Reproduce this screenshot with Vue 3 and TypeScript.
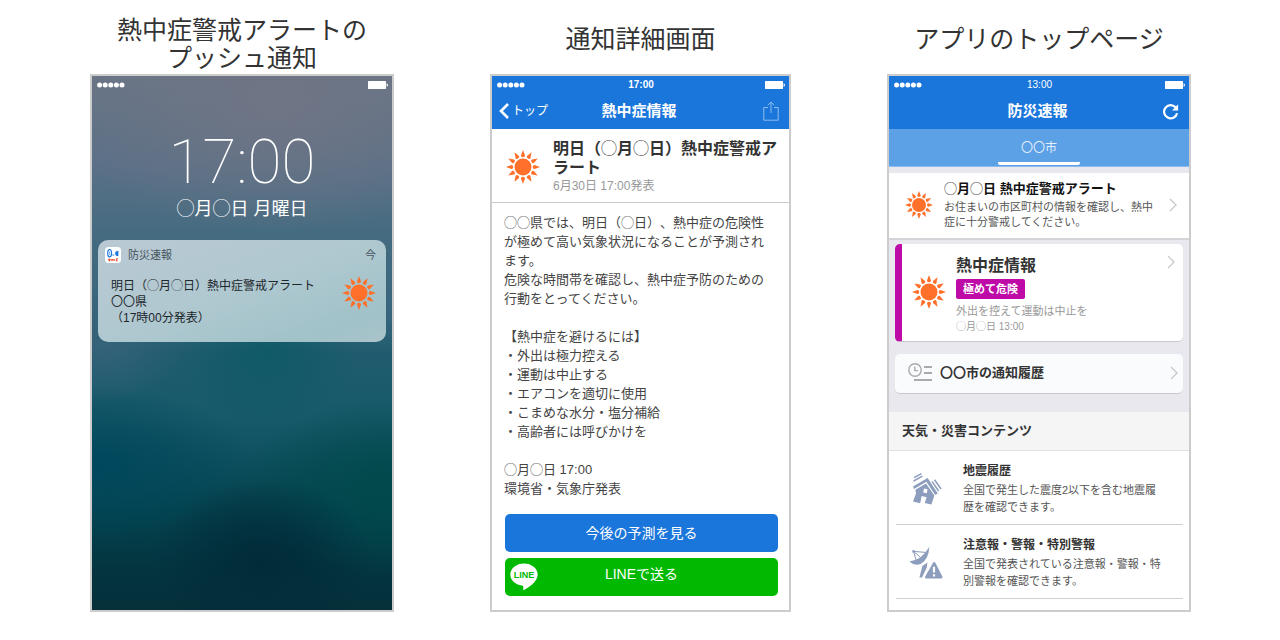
<script setup lang="ts">
interface ContentItem {
  id: 'quake' | 'dish'
  title: string
  text: string
}

const rays: number[] = Array.from({ length: 12 }, (_, i) => i * 30)

const tips: string[] = [
  '外出は極力控える',
  '運動は中止する',
  'エアコンを適切に使用',
  'こまめな水分・塩分補給',
  '高齢者には呼びかけを',
]

const contents: ContentItem[] = [
  { id: 'quake', title: '地震履歴', text: '全国で発生した震度2以下を含む地震履歴を確認できます。' },
  { id: 'dish', title: '注意報・警報・特別警報', text: '全国で発表されている注意報・警報・特別警報を確認できます。' },
]
</script>

<template>
  <svg class="defs" aria-hidden="true">
    <symbol id="sun" viewBox="0 0 32 32">
      <circle cx="16" cy="16" r="8" fill="#ff702b" />
      <path
        v-for="angle in rays"
        :key="angle"
        d="M16 0 L17.9 5.2 Q18 6.8 16 6.8 Q14 6.8 14.1 5.2 Z"
        fill="#ff702b"
        :transform="`rotate(${angle} 16 16)`"
      />
    </symbol>
    <symbol id="signal" viewBox="0 0 28 6">
      <circle v-for="n in 5" :key="n" :cx="n * 5.6 - 3" cy="3" r="2.5" fill="#fff" />
    </symbol>
    <symbol id="battery" viewBox="0 0 20 8">
      <rect width="18" height="8" rx="0.6" fill="#fff" />
      <path d="M18.6 2.2 Q20 2.6 20 4 Q20 5.4 18.6 5.8 Z" fill="#fff" />
    </symbol>
    <symbol id="chevron" viewBox="0 0 8 14">
      <path d="M1 1 L7 7 L1 13" fill="none" stroke="#cacace" stroke-width="1.4" />
    </symbol>
  </svg>

  <main class="page">
    <section class="column">
      <h2 class="caption two-line">熱中症警戒アラートの<br />プッシュ通知</h2>
      <div class="phone lock">
        <div class="status">
          <svg class="signal"><use href="#signal" /></svg>
          <svg class="battery"><use href="#battery" /></svg>
        </div>
        <time class="clock">17:00</time>
        <p class="lock-date">◯月◯日 月曜日</p>
        <article class="notice">
          <header class="notice-head">
            <svg class="app-icon" viewBox="0 0 16 16" aria-hidden="true">
              <rect width="16" height="16" rx="3.5" fill="#fff" />
              <ellipse cx="4.6" cy="6.2" rx="1.9" ry="3.7" fill="none" stroke="#1b76db" stroke-width="1.2" />
              <path d="M4.6 4.4 V8" stroke="#7db4ee" stroke-width="1" />
              <path d="M13.4 3.8 V9.2 Q10.2 9.4 10.2 6.5 Q10.2 3.8 13.4 3.8 Z" fill="#1b76db" />
              <path d="M7.4 8 H9.2" stroke="#1b76db" stroke-width="1" />
              <path d="M3.4 11.8 L4.4 13.4 L5.4 11.8 M6 13 H7.4 M8 12 V13.8 M9 13 H10.2 M11 12 H12.8 M11 13.6 H12.4" fill="none" stroke="#f0502e" stroke-width="1.3" />
            </svg>
            <span class="app-name">防災速報</span>
            <span class="ago">今</span>
          </header>
          <div class="notice-body">
            <p>明日（◯月◯日）熱中症警戒アラート<br />〇〇県<br />（17時00分発表）</p>
            <svg class="sun-l"><use href="#sun" /></svg>
          </div>
        </article>
      </div>
    </section>

    <section class="column">
      <h2 class="caption">通知詳細画面</h2>
      <div class="phone">
        <header class="bar">
          <div class="status">
            <svg class="signal"><use href="#signal" /></svg>
            <time class="bold">17:00</time>
            <svg class="battery"><use href="#battery" /></svg>
          </div>
          <nav class="nav">
            <a class="back" href="#top">
              <svg class="back-icon" viewBox="0 0 10 16" aria-hidden="true">
                <path d="M9 1 L2 8 L9 15" fill="none" stroke="#fff" stroke-width="2.6" />
              </svg>
              <span>トップ</span>
            </a>
            <h3>熱中症情報</h3>
            <button class="nav-button" type="button" aria-label="共有">
              <svg class="share" viewBox="0 0 16 20" aria-hidden="true">
                <path d="M5 6.5 H0.8 V19.2 H15.2 V6.5 H11 M8 12 V1.2 M4.8 4.2 L8 1 L11.2 4.2" fill="none" stroke="#8fbcf0" stroke-width="1" />
              </svg>
            </button>
          </nav>
        </header>
        <div class="headline">
          <svg class="sun-l"><use href="#sun" /></svg>
          <div>
            <h4>明日（<span class="thin">◯</span>月<span class="thin">◯</span>日）熱中症警戒ア<wbr />ラート</h4>
            <time>6月30日 17:00発表</time>
          </div>
        </div>
        <div class="detail">
          <p>◯◯県では、明日（◯日）、熱中症の危険性が極めて高い気象状況になることが予測されます。</p>
          <p>危険な時間帯を確認し、熱中症予防のための行動をとってください。</p>
          <h5>【熱中症を避けるには】</h5>
          <ul>
            <li v-for="tip in tips" :key="tip">・{{ tip }}</li>
          </ul>
          <p class="source">◯月◯日 17:00<br />環境省・気象庁発表</p>
        </div>
        <div class="actions">
          <button class="action forecast" type="button">今後の予測を見る</button>
          <button class="action line" type="button">
            <svg class="line-icon" viewBox="0 0 28 28" aria-hidden="true">
              <path d="M14 0.5 C6.4 0.5 0.3 5.4 0.3 11.6 C0.3 17.1 5.2 21.7 11.8 22.5 C13.4 22.8 13.5 23.5 13.2 26.8 C13.2 27.3 13.6 27.3 14 27.1 C19 24.3 27.7 18.8 27.7 11.6 C27.7 5.4 21.6 0.5 14 0.5 Z" fill="#fff" />
              <text x="14" y="15" text-anchor="middle">LINE</text>
            </svg>
            <span>LINEで送る</span>
          </button>
        </div>
      </div>
    </section>

    <section class="column">
      <h2 class="caption">アプリのトップページ</h2>
      <div class="phone">
        <header class="bar">
          <div class="status">
            <svg class="signal"><use href="#signal" /></svg>
            <time>13:00</time>
            <svg class="battery"><use href="#battery" /></svg>
          </div>
          <div class="nav">
            <span></span>
            <h3>防災速報</h3>
            <button class="nav-button" type="button" aria-label="更新">
              <svg class="refresh" viewBox="0 0 16 16" aria-hidden="true">
                <path d="M13.2 4.6 A6.2 6.2 0 1 0 14.2 9.6" fill="none" stroke="#fff" stroke-width="2.1" />
                <path d="M15.2 1.2 V7 H9.4 Z" fill="#fff" />
              </svg>
            </button>
          </div>
        </header>
        <nav class="tabs">
          <button class="tab" type="button">〇〇市</button>
        </nav>
        <div class="feed">
          <a class="alert" href="#alert">
            <svg class="sun-s"><use href="#sun" /></svg>
            <div>
              <h4><span class="thin">◯</span>月<span class="thin">◯</span>日 熱中症警戒アラート</h4>
              <p>お住まいの市区町村の情報を確認し、熱中症に十分警戒してください。</p>
            </div>
            <svg class="chevron"><use href="#chevron" /></svg>
          </a>
          <a class="card risk" href="#heat">
            <svg class="sun-l"><use href="#sun" /></svg>
            <div>
              <h4>熱中症情報</h4>
              <strong class="badge">極めて危険</strong>
              <p>外出を控えて運動は中止を</p>
              <time>◯月◯日 13:00</time>
            </div>
            <svg class="chevron"><use href="#chevron" /></svg>
          </a>
          <a class="card history" href="#history">
            <svg class="history-icon" viewBox="0 0 24 20" aria-hidden="true">
              <g fill="none" stroke="#aaa">
                <circle cx="7" cy="7" r="6.2" stroke-width="1.4" />
                <path d="M6.8 3.4 V7.6 H10" stroke-width="1.4" />
                <path d="M16 4 H24 M16 10 H24 M6 17 H24" stroke-width="2" />
              </g>
            </svg>
            <h4>〇〇市の通知履歴</h4>
            <svg class="chevron"><use href="#chevron" /></svg>
          </a>
        </div>
        <h3 class="group">天気・災害コンテンツ</h3>
        <ul class="contents">
          <li v-for="item in contents" :key="item.id">
            <a :href="'#' + item.id">
              <svg v-if="item.id === 'quake'" class="item-icon" viewBox="0 0 34 34" aria-hidden="true">
                <g fill="none" stroke="#8d9dbd" stroke-width="1.5">
                  <path d="M5 5.6 L12.5 1.6 M4.6 9 L13.4 4.2" />
                  <path d="M23 9.4 L29.6 19 M25.6 7.8 L32 17" />
                </g>
                <path d="M4 14.4 L18.6 6 L28.8 21.6 L26.2 23 L17.4 9.8 L5 17 Z" fill="#8d9dbd" />
                <path d="M6.4 17.8 L17 11.6 L25.4 23.4 L22.4 32.6 L15.8 31 L17.6 25.2 L12.6 24 L11.2 31.2 L4 29.6 L7 21.6 Z M15 16.4 L14.2 20.4 L17.8 21.2 L18.6 17.2 Z" fill="#8d9dbd" fill-rule="evenodd" />
              </svg>
              <svg v-else class="item-icon" viewBox="0 0 34 34" aria-hidden="true">
                <path d="M0.4 15.4 Q5.6 20.4 12 17.8 Q19.6 13.4 20.4 0.8 Q15 9 10.4 12 Q6.4 14.6 0.4 15.4 Z" fill="#8d9dbd" />
                <path d="M7 14 L4.6 5.4 L16.4 6.4 M4.6 5.4 L11 11" fill="none" stroke="#8d9dbd" stroke-width="1" />
                <circle cx="4.6" cy="5.4" r="1.4" fill="#8d9dbd" />
                <path d="M13.4 20 L18.4 16.6 L17.8 21.6 L13 31.6 H10.4 Z" fill="#8d9dbd" />
                <path d="M24.2 16.4 Q25.2 15.4 26.2 16.6 L33.4 30.4 Q33.8 32.2 32.2 32.4 H17.2 Q15.4 32.2 16.2 30.4 Z" fill="#8d9dbd" />
                <path d="M25 20.8 V26.6 M25 28.2 V30.4" stroke="#fff" stroke-width="2.2" />
              </svg>
              <div>
                <h4>{{ item.title }}</h4>
                <p>{{ item.text }}</p>
              </div>
            </a>
          </li>
        </ul>
      </div>
    </section>
  </main>
</template>

<style>
body {
  margin: 0;
  background: #fff;
}
</style>

<style scoped>
.defs {
  position: absolute;
  width: 0;
  height: 0;
}

.page {
  box-sizing: border-box;
  min-height: 100vh;
  padding: 0 89px 28px 90px;
  display: grid;
  grid-template-columns: 304fr 301fr 304fr;
  column-gap: 96px;
  font-family: "Liberation Sans", "Noto Sans CJK JP", sans-serif;
  color: #333;
  text-spacing-trim: space-all;
}

h2, h3, h4, h5, p, ul {
  margin: 0;
  padding: 0;
  list-style: none;
}

a {
  color: inherit;
  text-decoration: none;
}

button {
  border: 0;
  padding: 0;
  background: none;
  font-family: inherit;
  color: inherit;
  cursor: pointer;
}

svg {
  display: block;
  flex: none;
}

.column {
  display: flex;
  flex-direction: column;
  min-width: 0;
}

.caption {
  box-sizing: border-box;
  min-height: 74px;
  padding-top: 4px;
  display: flex;
  align-items: center;
  justify-content: center;
  text-align: center;
  font-size: 25px;
  font-weight: 400;
  line-height: 28px;
}

.caption.two-line {
  padding-top: 14px;
}

.phone {
  flex: 1;
  border: 2px solid #ccc;
  background: #fff;
}

.status {
  display: grid;
  grid-template-columns: 1fr auto 1fr;
  align-items: center;
  height: 17px;
  padding: 0 4px 0 5px;
  color: #fff;
  font-size: 10px;
  line-height: 17px;
}

.signal {
  width: 28px;
  height: 6px;
}

.battery {
  width: 20px;
  height: 8px;
  grid-column: 3;
  justify-self: end;
}

.bold {
  font-weight: 700;
}

.thin {
  font-weight: 400;
}

.sun-l {
  width: 34px;
  height: 34px;
}

.sun-s {
  width: 28px;
  height: 28px;
}

.chevron {
  width: 8px;
  height: 14px;
}

/* lock screen */
.lock {
  color: #fff;
  background:
    radial-gradient(ellipse 110px 85px at 57% 91%, #022b39 0%, #022b3988 50%, #022b3900 100%),
    radial-gradient(ellipse 150px 90px at 100% 77%, #00494b 0%, #00494b88 50%, #00494b00 100%),
    radial-gradient(ellipse 160px 80px at 0% 73%, #00475c 0%, #00475c88 50%, #00475c00 100%),
    radial-gradient(ellipse 90px 80px at 58% 51%, #075963aa 0%, #07596300 100%),
    radial-gradient(ellipse 80px 60px at 4% 50%, #35637a 0%, #35637a00 100%),
    radial-gradient(ellipse 220px 130px at 62% 5%, #6f7585 0%, #6f758500 100%),
    linear-gradient(#687586 0%, #5a7087 17%, #446b80 30%, #38667d 45%, #1f5b6e 52%, #175a6a 64%, #0f5160 71%, #04434e 81%, #033540 92%, #05303a 100%);
}

.clock {
  display: block;
  margin-top: 35px;
  text-align: center;
  font-family: Roboto, "Liberation Sans", sans-serif;
  font-size: 62px;
  font-weight: 100;
  line-height: 68px;
}

.lock-date {
  padding-top: 1px;
  text-align: center;
  font-size: 18px;
  line-height: 24px;
}

.notice {
  margin: 19px 6px 0;
  padding: 7px 10px 16px 7px;
  border-radius: 10px;
  color: #1c262b;
  background: linear-gradient(160deg, #bac9d3, #afc8d0 50%, #a0c2c8 85%, #abc3cb);
}

.notice-head {
  display: flex;
  align-items: center;
  gap: 7px;
  font-size: 11px;
  line-height: 16px;
  color: #45545f;
}

.app-icon {
  width: 16px;
  height: 16px;
}

.ago {
  margin-left: auto;
}

.notice-body {
  display: flex;
  align-items: flex-start;
  justify-content: space-between;
  padding: 13px 0 0 6px;
  font-size: 12px;
  line-height: 16px;
}

.notice-body p {
  padding-top: 2px;
}

/* app header */
.bar {
  background: #1b76db;
  color: #fff;
}

.nav {
  display: grid;
  grid-template-columns: 1fr auto 1fr;
  align-items: center;
  height: 36px;
  padding: 0 10px 0 7px;
}

.nav h3 {
  font-size: 15px;
  line-height: 20px;
}

.back {
  display: flex;
  align-items: center;
  gap: 3px;
  font-size: 12px;
  line-height: 16px;
}

.back-icon {
  width: 10px;
  height: 16px;
}

.nav-button {
  justify-self: end;
}

.share {
  width: 16px;
  height: 20px;
}

.refresh {
  width: 17px;
  height: 17px;
}

/* notification detail */
.headline {
  display: flex;
  align-items: center;
  gap: 13px;
  padding: 10px 10px 8px 14px;
  border-bottom: 1px solid #ccc;
}

.headline h4 {
  font-size: 16px;
  line-height: 19px;
}

.headline time {
  display: block;
  padding-top: 1px;
  font-size: 12px;
  line-height: 16px;
  color: #999;
}

.detail {
  padding: 10px 14px 0 12px;
  font-size: 13px;
  line-height: 19px;
  color: #444;
}

.detail h5 {
  margin-top: 19px;
  font-size: 13px;
  font-weight: 400;
}

.source {
  margin-top: 19px;
}

.actions {
  display: grid;
  gap: 6px;
  padding: 16px 11px 14px 13px;
}

.action {
  height: 38px;
  border-radius: 5px;
  color: #fff;
  font-size: 14px;
  line-height: 20px;
}

.forecast {
  background: #1b76db;
}

.line {
  display: grid;
  grid-template-columns: 28px 1fr 28px;
  align-items: center;
  padding: 0 5px;
  background: #00b900;
}

.line span {
  padding-bottom: 6px;
}

.line-icon {
  width: 28px;
  height: 28px;
}

.line-icon text {
  font-size: 9px;
  font-weight: 700;
  fill: #00b900;
}

/* top page */
.tabs {
  display: flex;
  justify-content: center;
  background: #5ca0e6;
  border-bottom: 1px solid #8dbbec;
}

.tab {
  width: 82px;
  padding: 11px 0 6px;
  border-bottom: 3px solid #fff;
  border-radius: 2px;
  color: #e3effb;
  font-size: 12px;
  line-height: 16px;
  margin-bottom: 1px;
}

.feed {
  padding: 6px 0 18px;
  background: #e9e8ef;
}

.alert {
  display: flex;
  align-items: center;
  gap: 11px;
  padding: 7px 12px 8px 16px;
  background: #fff;
  border-bottom: 2px solid #d3d3d8;
}

.alert div, .risk div {
  flex: 1;
  min-width: 0;
}

.alert h4 {
  font-size: 13px;
  line-height: 18px;
  color: #111;
  padding-bottom: 2px;
}

.alert p {
  font-size: 11px;
  line-height: 15px;
  color: #555;
}

.card {
  display: flex;
  align-items: center;
  margin: 0 6px;
  border-radius: 5px;
  background: #fff;
  border-bottom: 1px solid #c8c8cc;
}

.risk {
  margin-top: 4px;
  padding: 11px 8px 6px 10px;
  gap: 10px;
  border-left: 7px solid #be0aa6;
}

.risk .sun-l {
  align-self: flex-start;
  margin-top: 20px;
}

.risk h4 {
  font-size: 16px;
  line-height: 22px;
}

.badge {
  display: inline-block;
  vertical-align: top;
  margin: 2px 0 4px;
  padding: 0 7px;
  border-radius: 2px;
  background: #be0aa6;
  color: #fff;
  font-size: 11px;
  line-height: 20px;
}

.risk p {
  font-size: 11px;
  line-height: 16px;
  color: #999;
}

.risk time {
  display: block;
  font-size: 10px;
  line-height: 16px;
  color: #999;
}

.risk .chevron {
  align-self: flex-start;
}

.history {
  margin-top: 12px;
  padding: 9px 5px 10px 13px;
  gap: 8px;
  background: #fafbfd;
}

.history h4 {
  flex: 1;
  font-size: 13px;
  line-height: 20px;
}

.history-icon {
  width: 24px;
  height: 20px;
}

.group {
  padding: 9px 13px;
  background: #f5f5f5;
  border-bottom: 1px solid #e0e0e0;
  font-size: 13px;
  line-height: 20px;
}

.contents {
  padding: 0 6px 0 7px;
}

.contents li {
  border-bottom: 1px solid #d0d0d0;
}

.contents a {
  display: flex;
  align-items: center;
  gap: 20px;
  padding: 11px 20px 8px 13px;
}

.contents h4 {
  font-size: 12px;
  line-height: 18px;
}

.contents p {
  margin-top: 2px;
  font-size: 11px;
  line-height: 17px;
  color: #555;
}

.item-icon {
  width: 34px;
  height: 34px;
}
</style>
